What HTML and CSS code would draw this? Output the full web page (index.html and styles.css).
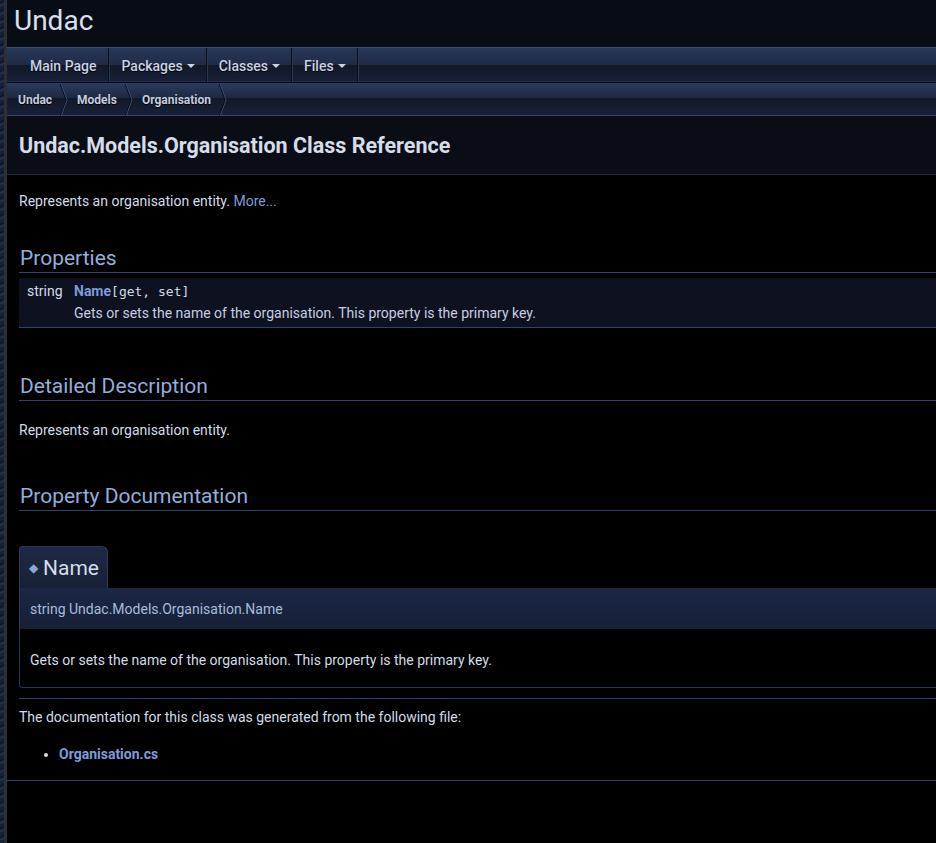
FILE: index.html
```html
<!DOCTYPE html>
<html>
<head>
<meta charset="utf-8">
<title>Undac: Undac.Models.Organisation Class Reference</title>
<link rel="stylesheet" href="styles.css">
</head>
<body>
<div class="page">
  <div class="top">
    <div class="projectname">Undac</div>
  </div>
  <nav class="menu">
    <ul class="menu-list">
      <li class="menu-item">Main Page</li>
      <li class="menu-item">Packages<span class="caret"></span></li>
      <li class="menu-item">Classes<span class="caret"></span></li>
      <li class="menu-item">Files<span class="caret"></span></li>
    </ul>
  </nav>
  <nav class="navpath">
    <ul class="crumbs">
      <li class="crumb">Undac<svg class="chev" width="8" height="32" viewBox="0 0 8 32"><polyline points="1,0 7,16 1,32" fill="none" stroke="#3a4e74" stroke-width="1"/><polyline points="0,0 6,16 0,32" fill="none" stroke="#0c1220" stroke-width="1"/></svg></li>
      <li class="crumb">Models<svg class="chev" width="8" height="32" viewBox="0 0 8 32"><polyline points="1,0 7,16 1,32" fill="none" stroke="#3a4e74" stroke-width="1"/><polyline points="0,0 6,16 0,32" fill="none" stroke="#0c1220" stroke-width="1"/></svg></li>
      <li class="crumb">Organisation<svg class="chev" width="8" height="32" viewBox="0 0 8 32"><polyline points="1,0 7,16 1,32" fill="none" stroke="#3a4e74" stroke-width="1"/><polyline points="0,0 6,16 0,32" fill="none" stroke="#0c1220" stroke-width="1"/></svg></li>
    </ul>
  </nav>
  <div class="header">
    <h1 class="title">Undac.Models.Organisation Class Reference</h1>
  </div>
  <div class="contents">
    <p class="brief">Represents an organisation entity. <a class="link">More...</a></p>

    <h2 class="groupheader first">Properties</h2>
    <div class="memberdecls">
      <div class="memrow">
        <span class="memtype">string</span>
        <span class="memname"><a class="link bold">Name</a><code class="mono">[get, set]</code></span>
      </div>
      <div class="memdesc">Gets or sets the name of the organisation. This property is the primary key.</div>
    </div>

    <h2 class="groupheader">Detailed Description</h2>
    <p class="text">Represents an organisation entity.</p>

    <h2 class="groupheader">Property Documentation</h2>
    <div class="memitem">
      <h2 class="memtitle"><span class="permalink">◆</span>Name</h2>
      <div class="memproto">string Undac.Models.Organisation.Name</div>
      <div class="memdoc">Gets or sets the name of the organisation. This property is the primary key.</div>
    </div>
    <hr class="rule">
    <p class="text gen">The documentation for this class was generated from the following file:</p>
    <ul class="files">
      <li><a class="link bold">Organisation.cs</a></li>
    </ul>
  </div>
  <hr class="footer">
</div>
</body>
</html>
```
FILE: styles.css
```css
html, body {
  margin: 0;
  padding: 0;
  height: 100%;
}
body {
  background-color: #151d33;
  background-image: repeating-linear-gradient(160deg, #1b2540 0px, #0f1526 3px, #26324f 5px, #131a2d 8px);
  font-family: Roboto, "Liberation Sans", sans-serif;
  font-size: 14px;
  color: #d4dbe8;
}
.page {
  margin-left: 4px;
  border-left: 3px solid #2e2f33;
  background: #000;
  min-height: 100%;
  overflow: hidden;
}
.top {
  height: 47px;
  background: #080c15;
  display: flex;
  align-items: center;
}
.projectname {
  padding-left: 7px;
  font-size: 28px;
  color: #d8e0ec;
  line-height: 40px;
  margin-top: -6px;
}
.menu {
  height: 36px;
  box-sizing: border-box;
  border-top: 1px solid #3c4c6e;
  border-bottom: 1px solid #050810;
  background: linear-gradient(to bottom, #27385a 0%, #1f2a46 50%, #121826 51%, #172038 96%, #263552 100%);
}
.menu-list {
  list-style: none;
  margin: 0;
  padding: 0 0 0 11px;
  display: flex;
  height: 100%;
}
.menu-item {
  display: flex;
  align-items: center;
  padding: 2px 11px 0 12px;
  border-right: 1px solid #0a0e18;
  box-shadow: 1px 0 0 #2a3858;
  font-size: 14px;
  font-weight: 500;
  color: #c8d3e6;
  text-shadow: 0 1px 1px #000;
}
.menu-item:first-child {
  padding-right: 12px;
}
.caret {
  width: 0;
  height: 0;
  margin-left: 4px;
  border-left: 4px solid transparent;
  border-right: 4px solid transparent;
  border-top: 4px solid #c8d3e6;
}
.navpath {
  height: 33px;
  box-sizing: border-box;
  border-top: 1px solid #2e3d5e;
  border-bottom: 1px solid #3a4868;
  background: linear-gradient(to bottom, #2a3a5c 0%, #1d2842 45%, #121828 46%, #182138 100%);
}
.crumbs {
  list-style: none;
  margin: 0;
  padding: 0 0 0 11px;
  display: flex;
  height: 100%;
}
.crumb {
  display: flex;
  align-items: center;
  padding-top: 1px;
  font-size: 12px;
  font-weight: 700;
  color: #c4cde0;
  text-shadow: 0 1px 1px #000;
}
.chev {
  margin: -1px 9px 0 8px;
  display: block;
}
.header {
  background: #0a0d16;
  border-bottom: 1px solid #1f2a40;
  height: 58px;
  display: flex;
  align-items: center;
}
.title {
  margin: 0;
  padding-left: 12px;
  font-size: 21.5px;
  font-weight: 700;
  color: #d6dde8;
  margin-top: 1px;
}
.contents {
  padding: 0 0 0 12px;
}
.brief {
  margin: 17px 0 0;
  line-height: 18px;
}
.link {
  color: #7d9bd9;
  text-decoration: none;
}
.bold {
  font-weight: 700;
}
.groupheader {
  margin: 0;
  font-size: 21px;
  font-weight: 400;
  color: #92aedd;
  border-bottom: 1px solid #2e4470;
  padding: 0 0 2px 1px;
  line-height: 24px;
}
.groupheader.first {
  margin-top: 36px;
}
.memberdecls {
  background: #0d1120;
  border-bottom: 1px solid #2e4470;
  margin-top: 5px;
  padding: 4px 0 5px;
}
.memrow {
  display: flex;
  line-height: 19px;
}
.memtype {
  width: 55px;
  box-sizing: border-box;
  padding-left: 8px;
  color: #d4dbe8;
}
.mono {
  font-family: "DejaVu Sans Mono", monospace;
  font-size: 13px;
  color: #d4dbe8;
}
.memdesc {
  padding-left: 55px;
  color: #c6cfe0;
  line-height: 18px;
  margin-top: 3px;
}
.memberdecls + .groupheader {
  margin-top: 46px;
}
.text {
  margin: 20px 0 0;
  line-height: 18px;
}
.text + .groupheader {
  margin-top: 45px;
}
.memitem {
  margin-top: 35px;
}
.memtitle {
  display: inline-flex;
  align-items: center;
  margin: 0;
  height: 42px;
  box-sizing: border-box;
  padding: 0 8px 0 9px;
  font-size: 21px;
  font-weight: 400;
  color: #d6dde8;
  background: linear-gradient(to bottom, #1e2a46, #172036);
  border: 1px solid #2a3858;
  border-bottom: none;
  border-radius: 4px 6px 0 0;
}
.permalink {
  font-size: 12px;
  color: #8ea6d6;
  margin-right: 5px;
}
.memproto {
  height: 41px;
  box-sizing: border-box;
  display: flex;
  align-items: center;
  padding: 1px 0 0 10px;
  background: linear-gradient(to bottom, #1c2744, #161f36);
  border-left: 1px solid #2a3858;
  color: #a8bcdc;
}
.memdoc {
  height: 59px;
  box-sizing: border-box;
  border: 1px solid #2a3858;
  border-top: none;
  border-right: none;
  border-radius: 0 0 0 4px;
  padding: 22px 0 0 10px;
  line-height: 18px;
}
.rule {
  border: none;
  border-top: 1px solid #2e4470;
  margin: 10px 0 0;
}
.gen {
  margin-top: 9px;
}
.files {
  margin: 19px 0 0;
  padding-left: 40px;
  line-height: 18px;
}
.footer {
  border: none;
  border-top: 1px solid #2e4470;
  margin: 17px 0 0;
}
```
